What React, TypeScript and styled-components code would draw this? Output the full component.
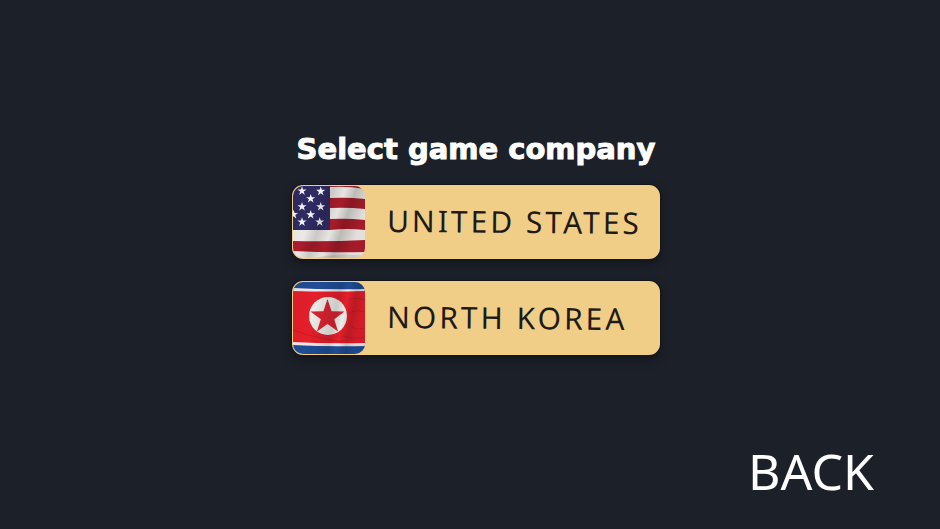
import React from "react";
import styled, { createGlobalStyle } from "styled-components";

const GlobalStyle = createGlobalStyle`
  *, *::before, *::after { box-sizing: border-box; }
  body {
    margin: 0;
    background: #1c2029;
    font-family: "Noto Sans", "Open Sans", sans-serif;
  }
`;

const Screen = styled.div`
  display: flex;
  flex-direction: column;
  min-height: 100vh;
`;

const Main = styled.main`
  flex: 1;
  display: flex;
  flex-direction: column;
  align-items: center;
  justify-content: center;
  padding: 48px 0 0 12px;
`;

const Menu = styled.section`
  display: flex;
  flex-direction: column;
  gap: 22px;
  width: 39%;
  min-width: 368px;
  max-width: 560px;
`;

const Title = styled.h1`
  margin: 0;
  color: #fff;
  font: 700 29px/28px "DejaVu Sans", sans-serif;
  -webkit-text-stroke: 1px #fff;
  text-align: center;
  white-space: nowrap;
`;

const CountryButton = styled.button`
  display: flex;
  align-items: center;
  gap: 22px;
  height: 74px;
  padding: 0 1px;
  border: 0;
  border-radius: 11px;
  background: #f1ce88;
  box-shadow: 0 0 0 1px #15151a, 0 4px 10px #12141b;
  color: #1f1a15;
  font: 400 30px/40px "Noto Sans", sans-serif;
  letter-spacing: 3px;
  white-space: nowrap;
  cursor: pointer;
`;

const CountryName = styled.span`
  transform: rotate(0.5deg);
`;

const FlagDrawing = styled.svg`
  flex: none;
  width: 72px;
  height: 72px;
  border-radius: 10px;
`;

const Footer = styled.footer`
  display: flex;
  justify-content: flex-end;
  padding: 0 66px 28px;
`;

const BackButton = styled.button`
  padding: 0;
  border: 0;
  background: none;
  color: #fff;
  font: 400 50px/60px "Noto Sans", sans-serif;
  cursor: pointer;
`;

function starPoints(cx: number, cy: number, radius: number) {
  return Array.from({ length: 10 }, (_, i) => {
    const r = i % 2 ? radius * 0.39 : radius;
    const a = (i * Math.PI) / 5 - Math.PI / 2;
    return `${(cx + r * Math.cos(a)).toFixed(2)},${(cy + r * Math.sin(a)).toFixed(2)}`;
  }).join(" ");
}

const usStars = [
  [9, 5], [27.7, 5.3], [17.7, 12.7], [9, 20.7], [27.7, 20.7],
  [0.5, 28.5], [17.7, 28.7], [9, 36], [26.7, 36],
];

function UnitedStatesFlag() {
  return (
    <FlagDrawing viewBox="0 0 72 72" aria-hidden="true">
      <defs>
        <linearGradient id="us-folds" x1="0" y1="0" x2="1" y2="0.35">
          <stop offset="0" stopColor="#000" stopOpacity="0.03" />
          <stop offset="0.35" stopColor="#000" stopOpacity="0" />
          <stop offset="0.5" stopColor="#000" stopOpacity="0.14" />
          <stop offset="0.66" stopColor="#000" stopOpacity="0.02" />
          <stop offset="0.8" stopColor="#000" stopOpacity="0.2" />
          <stop offset="1" stopColor="#000" stopOpacity="0.04" />
        </linearGradient>
      </defs>
      <rect width="72" height="72" fill="#ebe8e5" />
      <g fill="#ab1c2b">
        <path d="M37 0H72V3Q55 0 37 1Z" />
        <path d="M37 12Q54 11 72 13V23Q54 21 37 22Z" />
        <path d="M37 33Q54 32 72 34V44Q54 42 37 44Z" />
        <path d="M0 55Q36 56 72 54V66Q36 67 0 65Z" />
      </g>
      <path d="M0 0H37V44H0Z" fill="#2f2b62" />
      <g fill="#f5f3f8">
        {usStars.map(([x, y]) => (
          <polygon key={`${x}-${y}`} points={starPoints(x, y, 4.8)} />
        ))}
      </g>
      <rect width="72" height="72" fill="url(#us-folds)" />
      <path d="M22 72Q46 66 72 70V72Z" fill="#777" opacity="0.2" />
    </FlagDrawing>
  );
}

function NorthKoreaFlag() {
  return (
    <FlagDrawing viewBox="0 0 72 72" aria-hidden="true">
      <defs>
        <linearGradient id="nk-folds" x1="0" y1="0" x2="1" y2="0.2">
          <stop offset="0" stopColor="#000" stopOpacity="0.05" />
          <stop offset="0.35" stopColor="#000" stopOpacity="0" />
          <stop offset="0.65" stopColor="#000" stopOpacity="0.14" />
          <stop offset="0.76" stopColor="#000" stopOpacity="0" />
          <stop offset="0.88" stopColor="#000" stopOpacity="0.18" />
          <stop offset="1" stopColor="#000" stopOpacity="0.08" />
        </linearGradient>
      </defs>
      <rect width="72" height="72" fill="#1f4d96" />
      <path d="M0 6Q36 8 72 7V64Q36 65 0 63Z" fill="#f3e9ea" />
      <path d="M0 9Q36 10 72 9V61Q36 62 0 60Z" fill="#e4202b" />
      <circle cx="35" cy="34" r="19" fill="#ecebe8" />
      <polygon points={starPoints(34.5, 35, 18)} fill="#d92430" />
      <g fill="none" stroke="#8f0e19" strokeWidth="1" opacity="0.3">
        <path d="M0 48Q16 54 28 56T50 60" />
        <path d="M56 17Q64 15 72 18" />
        <path d="M56 31Q64 27 72 30" />
        <path d="M57 44Q64 49 72 46" />
        <path d="M50 54Q62 58 72 55" />
      </g>
      <rect width="72" height="72" fill="url(#nk-folds)" />
    </FlagDrawing>
  );
}

const countries = [
  { name: "UNITED STATES", Flag: UnitedStatesFlag },
  { name: "NORTH KOREA", Flag: NorthKoreaFlag },
];

export default function App() {
  return (
    <Screen>
      <GlobalStyle />
      <Main>
        <Menu aria-labelledby="menu-title">
          <Title id="menu-title">Select game company</Title>
          {countries.map(({ name, Flag }) => (
            <CountryButton key={name} type="button">
              <Flag />
              <CountryName>{name}</CountryName>
            </CountryButton>
          ))}
        </Menu>
      </Main>
      <Footer>
        <BackButton type="button">BACK</BackButton>
      </Footer>
    </Screen>
  );
}
